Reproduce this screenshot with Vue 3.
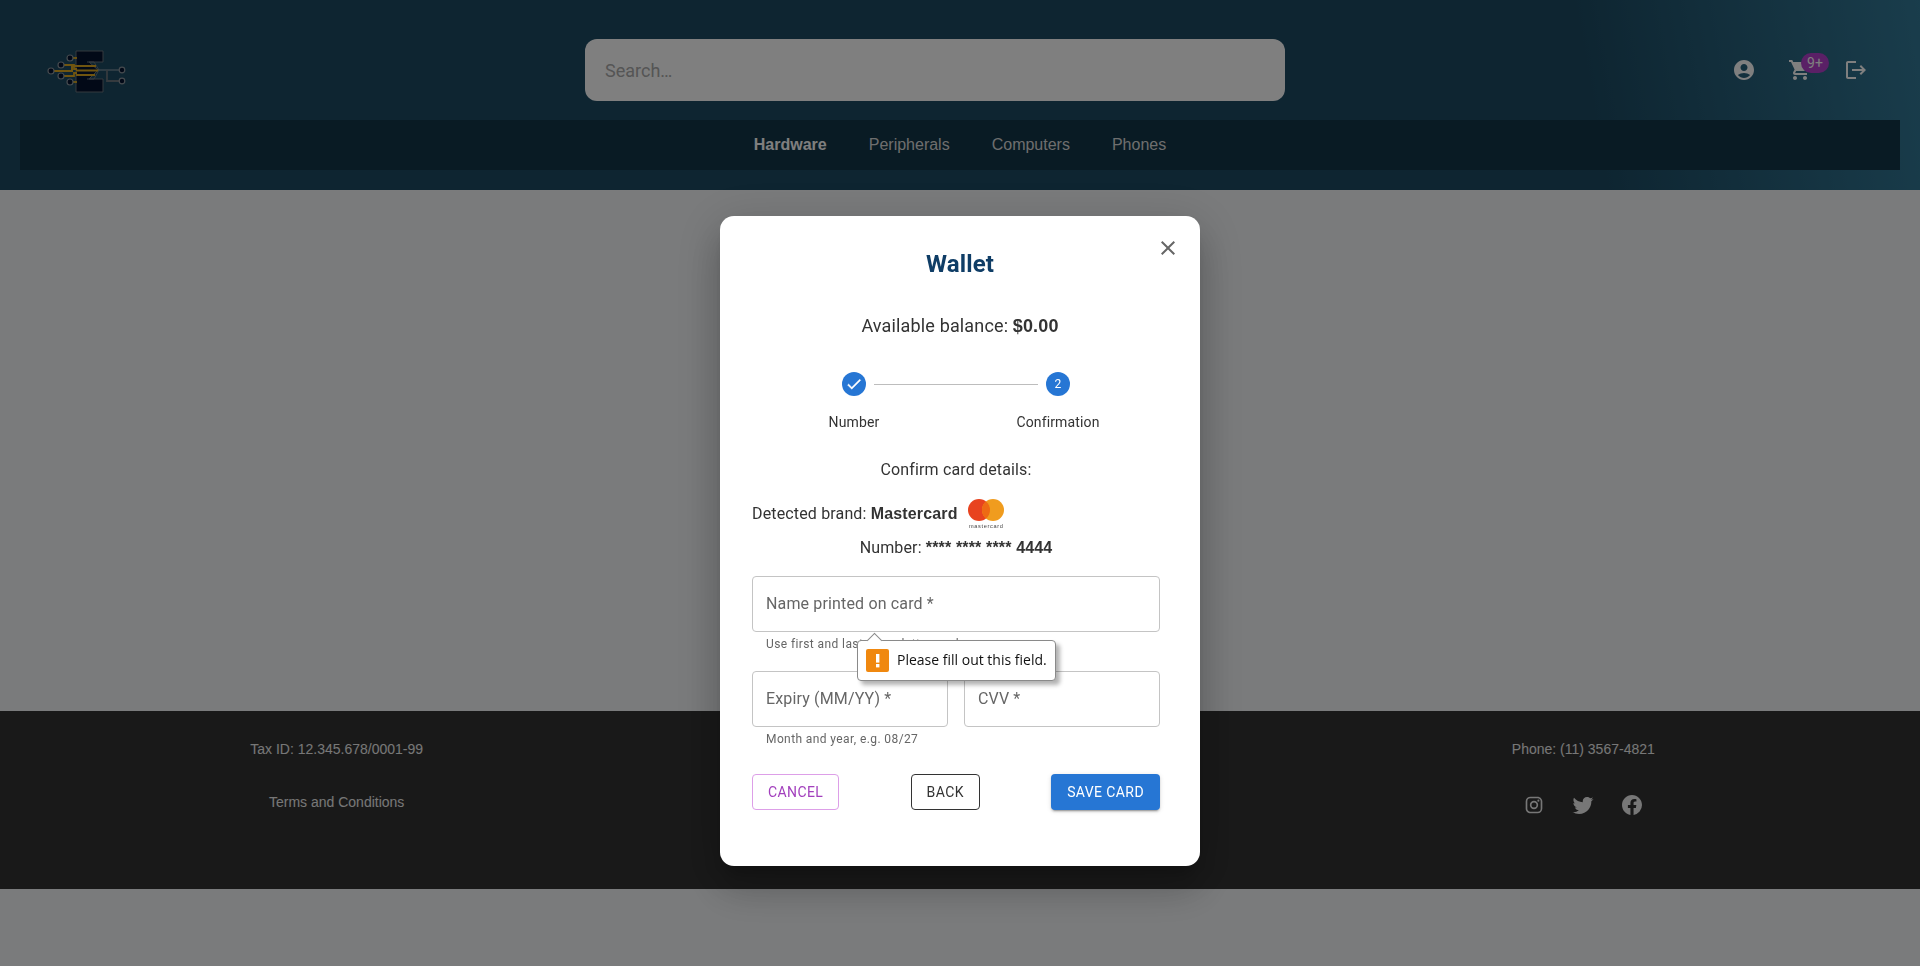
<script setup>
const navItems = [
  { label: 'Hardware', active: true },
  { label: 'Peripherals', active: false },
  { label: 'Computers', active: false },
  { label: 'Phones', active: false },
]
</script>

<template>
  <div class="page">
    <header class="header">
      <div class="top">
        <div class="logo">
          <svg width="80" height="44" viewBox="0 0 80 44">
            <path d="M30 2H57V13H43L52 21L43 30H57V43H30Z" fill="#04122e" stroke="#6a747d" stroke-width="1" />
            <path d="M41 13H48L53 21L48 30H41" fill="none" stroke="#6a747d" stroke-width="1" />
            <g stroke="#e0ab20" stroke-width="1.8" fill="none">
              <path d="M27 9H31" />
              <path d="M18 16H28V20H31" />
              <path d="M8 22H26V17H50" stroke-width="2" />
              <path d="M18 27H28V24H31" />
              <path d="M27 33H31" />
              <path d="M30 21.5H52" stroke-width="2" />
              <path d="M30 26H49" stroke-width="2" />
            </g>
            <g stroke="#9aa5ae" stroke-width="1" fill="none">
              <path d="M52 21H74" />
              <path d="M61 21V32H74" stroke-width="1.8" stroke="#6a747d" />
            </g>
            <g fill="#04122e" stroke="#8a949c" stroke-width="1.2">
              <circle cx="24" cy="9" r="3" />
              <circle cx="15" cy="16" r="3" />
              <circle cx="5" cy="22" r="3" />
              <circle cx="15" cy="27" r="3" />
              <circle cx="24" cy="33" r="3" />
              <circle cx="76" cy="21" r="2.8" />
              <circle cx="76" cy="32" r="2.8" />
            </g>
          </svg>
        </div>
        <input class="search" placeholder="Search…" />
        <div class="actions">
          <svg class="icon" viewBox="0 0 24 24"><path d="M12 2C6.48 2 2 6.48 2 12s4.48 10 10 10 10-4.48 10-10S17.52 2 12 2m0 4c1.93 0 3.5 1.57 3.5 3.5S13.93 13 12 13s-3.5-1.57-3.5-3.5S10.07 6 12 6m0 14c-2.03 0-4.43-.82-6.14-2.88C7.55 15.8 9.68 15 12 15s4.45.8 6.14 2.12C16.43 19.18 14.03 20 12 20" /></svg>
          <div class="cart">
            <svg class="icon" viewBox="0 0 24 24"><path d="M7 18c-1.1 0-1.99.9-1.99 2S5.9 22 7 22s2-.9 2-2-.9-2-2-2M1 2v2h2l3.6 7.59-1.35 2.45c-.16.28-.25.61-.25.96 0 1.1.9 2 2 2h12v-2H7.42c-.14 0-.25-.11-.25-.25l.03-.12.9-1.63h7.45c.75 0 1.41-.41 1.75-1.03l3.58-6.49c.08-.14.12-.31.12-.48 0-.55-.45-1-1-1H5.21l-.94-2zm16 16c-1.1 0-1.99.9-1.99 2s.89 2 1.99 2 2-.9 2-2-.9-2-2-2" /></svg>
            <span class="badge">9+</span>
          </div>
          <svg class="icon" viewBox="0 0 24 24"><path d="m17 7-1.41 1.41L18.17 11H8v2h10.17l-2.58 2.58L17 17l5-5zM4 5h8V3H4c-1.1 0-2 .9-2 2v14c0 1.1.9 2 2 2h8v-2H4z" /></svg>
        </div>
      </div>
      <nav class="nav">
        <a v-for="item in navItems" :key="item.label" :class="{ active: item.active }">{{ item.label }}</a>
      </nav>
    </header>

    <main class="main"></main>

    <footer class="footer">
      <div class="col">
        <p>Tax ID: 12.345.678/0001-99</p>
        <p class="second">Terms and Conditions</p>
      </div>
      <div class="col"></div>
      <div class="col">
        <p>Phone: (11) 3567-4821</p>
        <div class="social">
          <svg class="icon insta" viewBox="0 0 24 24"><path d="M7.8 2h8.4C19.4 2 22 4.6 22 7.8v8.4a5.8 5.8 0 0 1-5.8 5.8H7.8C4.6 22 2 19.4 2 16.2V7.8A5.8 5.8 0 0 1 7.8 2m-.2 2A3.6 3.6 0 0 0 4 7.6v8.8C4 18.39 5.61 20 7.6 20h8.8a3.6 3.6 0 0 0 3.6-3.6V7.6C20 5.61 18.39 4 16.4 4zm9.65 1.5a1.25 1.25 0 0 1 1.25 1.25A1.25 1.25 0 0 1 17.25 8 1.25 1.25 0 0 1 16 6.75a1.25 1.25 0 0 1 1.25-1.25M12 7a5 5 0 0 1 5 5 5 5 0 0 1-5 5 5 5 0 0 1-5-5 5 5 0 0 1 5-5m0 2a3 3 0 0 0-3 3 3 3 0 0 0 3 3 3 3 0 0 0 3-3 3 3 0 0 0-3-3" /></svg>
          <svg class="icon" viewBox="0 0 24 24"><path d="M22.46 6c-.77.35-1.6.58-2.46.69.88-.53 1.56-1.37 1.88-2.38-.83.5-1.75.85-2.72 1.05C18.37 4.5 17.26 4 16 4c-2.35 0-4.27 1.92-4.27 4.29 0 .34.04.67.11.98C8.28 9.09 5.11 7.38 3 4.79c-.37.63-.58 1.37-.58 2.15 0 1.49.75 2.81 1.91 3.56-.71 0-1.37-.2-1.95-.5v.03c0 2.08 1.48 3.82 3.44 4.21a4.22 4.22 0 0 1-1.93.07 4.28 4.28 0 0 0 4 2.98 8.521 8.521 0 0 1-5.33 1.84c-.34 0-.68-.02-1.02-.06C3.44 20.29 5.7 21 8.12 21 16 21 20.33 14.46 20.33 8.79c0-.19 0-.37-.01-.56.84-.6 1.56-1.36 2.14-2.23" /></svg>
          <svg class="icon" viewBox="0 0 24 24"><path d="M12 2.04c-5.5 0-10 4.49-10 10.02 0 5 3.66 9.15 8.44 9.9v-7H7.9v-2.9h2.54V9.85c0-2.51 1.49-3.89 3.78-3.89 1.09 0 2.23.19 2.23.19v2.47h-1.26c-1.24 0-1.63.77-1.63 1.54v1.88h2.78l-.45 2.9h-2.33v7a10 10 0 0 0 8.44-9.9c0-5.53-4.5-10.02-10-10.02" /></svg>
        </div>
      </div>
    </footer>

    <div class="backdrop">
      <div class="modal">
        <svg class="close" viewBox="0 0 24 24"><path d="M19 6.41 17.59 5 12 10.59 6.41 5 5 6.41 10.59 12 5 17.59 6.41 19 12 13.41 17.59 19 19 17.59 13.41 12z" /></svg>
        <h2 class="title">Wallet</h2>
        <p class="balance">Available balance: <strong>$0.00</strong></p>

        <div class="content">
          <div class="stepper">
            <div class="step">
              <span class="dot">
                <svg width="18" height="18" viewBox="0 0 24 24"><path d="M9 16.17 4.83 12l-1.42 1.41L9 19 21 7l-1.41-1.41z" fill="#fff" stroke="#fff" stroke-width="0.5" /></svg>
              </span>
              <span class="step-label">Number</span>
            </div>
            <div class="step">
              <span class="connector"></span>
              <span class="dot">2</span>
              <span class="step-label">Confirmation</span>
            </div>
          </div>

          <p class="confirm">Confirm card details:</p>
          <div class="brand">
            <span class="brand-text">Detected brand: <strong>Mastercard</strong></span>
            <svg class="mc" width="36" height="30" viewBox="0 0 36 30">
              <circle cx="11" cy="11" r="11" fill="#e8431f" />
              <circle cx="25" cy="11" r="11" fill="#f09c1e" />
              <path d="M18 2.5a11 11 0 0 1 0 17a11 11 0 0 1 0-17z" fill="#ee6a14" />
              <text x="18" y="28.5" font-size="5.6" text-anchor="middle" textLength="34" font-family="Liberation Sans, sans-serif" fill="#444">mastercard</text>
            </svg>
          </div>
          <p class="number">Number: <strong>**** **** **** 4444</strong></p>

          <div class="field name-field">
            <input placeholder="Name printed on card *" />
            <p class="helper">Use first and last name letters only</p>
            <div class="tooltip">
              <span class="warn">
                <svg width="23" height="23" viewBox="0 0 23 23"><rect x="10" y="5" width="3.4" height="8.6" fill="#fff" /><rect x="10" y="15" width="3.4" height="3.4" fill="#fff" /></svg>
              </span>
              <span class="tip-text">Please fill out this field.</span>
            </div>
          </div>

          <div class="row">
            <div class="field">
              <input placeholder="Expiry (MM/YY) *" />
              <p class="helper">Month and year, e.g. 08/27</p>
            </div>
            <div class="field">
              <input placeholder="CVV *" />
            </div>
          </div>

          <div class="buttons">
            <button class="btn cancel">Cancel</button>
            <button class="btn back">Back</button>
            <button class="btn save">Save card</button>
          </div>
        </div>
      </div>
    </div>
  </div>
</template>

<style>
html, body {
  background: #f4f6f8;
}
</style>

<style scoped>
.page {
  font-family: Roboto, "Liberation Sans", sans-serif;
  min-height: 966px;
}
p, h2 {
  margin: 0;
}
.header {
  height: 190px;
  box-sizing: border-box;
  padding: 20px 20px 0;
  background: linear-gradient(80deg, #1c4a62 0%, #1c4a62 82%, #337a98 100%);
}
.top {
  height: 100px;
  display: grid;
  grid-template-columns: 565px 700px 1fr;
  align-items: center;
}
.logo {
  padding-left: 26px;
  padding-top: 1px;
  display: flex;
}
.search {
  height: 62px;
  box-sizing: border-box;
  border: none;
  outline: none;
  border-radius: 12px;
  background: #fff;
  padding: 0 20px;
  font: 400 18px Roboto, sans-serif;
}
.search::placeholder {
  color: #aaa;
  opacity: 1;
}
.actions {
  display: flex;
  justify-content: flex-end;
  align-items: center;
  gap: 30px;
  padding-right: 32px;
}
.icon {
  width: 24px;
  height: 24px;
  fill: #fff;
  display: block;
}
.cart {
  position: relative;
  margin: 0 2px 0 2px;
}
.badge {
  position: absolute;
  left: 13px;
  top: -5px;
  width: 28px;
  height: 20px;
  border-radius: 10px;
  background: #b440cc;
  color: #fff;
  font-size: 14px;
  line-height: 20px;
  text-align: center;
}
.nav {
  height: 50px;
  background: #123648;
  display: flex;
  justify-content: center;
  align-items: center;
  gap: 42px;
  font: 400 16px "Liberation Sans", Arial, sans-serif;
  color: #ddd;
}
.nav .active {
  font-weight: 700;
  color: #fff;
}
.main {
  height: 521px;
}
.footer {
  height: 178px;
  background: #333;
  display: grid;
  grid-template-columns: repeat(3, 1fr);
  padding: 0 25px;
  color: #eee;
  font: 400 14px "Liberation Sans", Arial, sans-serif;
}
.col {
  display: flex;
  flex-direction: column;
  align-items: center;
  padding-top: 28px;
}
.col p {
  line-height: 20px;
}
.col .second {
  margin-top: 33px;
}
.social {
  display: flex;
  align-items: center;
  gap: 25px;
  margin-top: 34px;
}
.social .icon {
  fill: #eee;
}
.social .insta {
  width: 20px;
  height: 20px;
  margin: 0 2px;
}
.backdrop {
  position: fixed;
  inset: 0;
  background: rgba(0, 0, 0, 0.5);
  display: flex;
  justify-content: center;
  align-items: flex-start;
  padding-top: 216px;
  box-sizing: border-box;
}
.modal {
  position: relative;
  width: 480px;
  box-sizing: border-box;
  padding: 32px 0 56px;
  background: #fff;
  border-radius: 14px;
  box-shadow: 0 11px 15px -7px rgba(0, 0, 0, 0.2), 0 24px 38px 3px rgba(0, 0, 0, 0.14), 0 9px 46px 8px rgba(0, 0, 0, 0.12);
  color: #333;
  font-size: 16px;
  letter-spacing: 0.15px;
}
.content {
  margin: 0 40px 0 32px;
}
.close {
  position: absolute;
  right: 20px;
  top: 20px;
  width: 24px;
  height: 24px;
  fill: #666;
}
.title {
  font-size: 24px;
  font-weight: 700;
  line-height: 32px;
  text-align: center;
  color: #0f3d66;
}
strong {
  font-family: "Liberation Sans", Arial, sans-serif;
  font-weight: 700;
}
.balance {
  margin-top: 32px;
  line-height: 28px;
  font-size: 18px;
  text-align: center;
}
.stepper {
  margin-top: 32px;
  display: grid;
  grid-template-columns: 1fr 1fr;
}
.step {
  position: relative;
  display: flex;
  flex-direction: column;
  align-items: center;
}
.dot {
  width: 24px;
  height: 24px;
  border-radius: 50%;
  background: #2676d4;
  color: #fff;
  font-size: 12px;
  display: flex;
  align-items: center;
  justify-content: center;
}
.connector {
  position: absolute;
  left: calc(-50% + 20px);
  right: calc(50% + 20px);
  top: 12px;
  border-top: 1px solid #bdbdbd;
}
.step-label {
  margin-top: 16px;
  font-size: 14px;
  line-height: 20px;
}
.confirm {
  margin-top: 26px;
  line-height: 24px;
  text-align: center;
}
.brand {
  margin-top: 17px;
  height: 30px;
  display: flex;
  align-items: center;
  gap: 10px;
}
.brand-text {
  padding-bottom: 2px;
}
.number {
  margin-top: 7px;
  line-height: 24px;
  text-align: center;
}
.field {
  position: relative;
}
.field input {
  display: block;
  width: 100%;
  height: 56px;
  box-sizing: border-box;
  border: 1px solid #c4c4c4;
  border-radius: 4px;
  outline: none;
  padding: 0 13px 2px;
  font: 400 16px Roboto, sans-serif;
  letter-spacing: 0.15px;
}
.field input::placeholder {
  color: #666;
  opacity: 1;
}
.name-field {
  margin-top: 16px;
}
.helper {
  margin: 4px 14px 0;
  font-size: 12px;
  line-height: 16px;
  letter-spacing: 0.4px;
  color: #666;
}
.tooltip {
  position: absolute;
  z-index: 2;
  left: 105px;
  top: 64px;
  height: 41px;
  box-sizing: border-box;
  padding: 0 8px;
  display: flex;
  align-items: center;
  gap: 8px;
  background: #fff;
  border: 1px solid #8a8a8a;
  border-radius: 4px;
  box-shadow: 4px 4px 4px rgba(0, 0, 0, 0.3);
  font: 400 14px "Open Sans", "Noto Sans", sans-serif;
  letter-spacing: 0;
  color: #111;
  white-space: nowrap;
}
.tooltip::before {
  content: "";
  position: absolute;
  left: 11px;
  top: -6px;
  width: 10px;
  height: 10px;
  background: #fff;
  border-left: 1px solid #8a8a8a;
  border-top: 1px solid #8a8a8a;
  transform: rotate(45deg);
}
.tip-text {
  padding-bottom: 2px;
}
.warn {
  width: 23px;
  height: 23px;
  border-radius: 2px;
  background: #f0880f;
  display: block;
}
.row {
  margin-top: 19px;
  display: grid;
  grid-template-columns: 1fr 1fr;
  gap: 16px;
}
.buttons {
  margin-top: 27px;
  display: flex;
  justify-content: space-between;
}
.btn {
  height: 36px;
  box-sizing: border-box;
  padding: 0 15px;
  background: #fff;
  border-radius: 4px;
  font: 400 14px Roboto, sans-serif;
  letter-spacing: 0.4px;
  text-transform: uppercase;
}
.cancel {
  border: 1px solid #dd9fe8;
  color: #a23fbd;
}
.back {
  border: 1px solid #333;
  color: #333;
}
.save {
  border: none;
  padding: 0 16px;
  background: #2676d4;
  color: #fff;
  box-shadow: 0 3px 1px -2px rgba(0, 0, 0, 0.2), 0 2px 2px rgba(0, 0, 0, 0.14), 0 1px 5px rgba(0, 0, 0, 0.12);
}
</style>
